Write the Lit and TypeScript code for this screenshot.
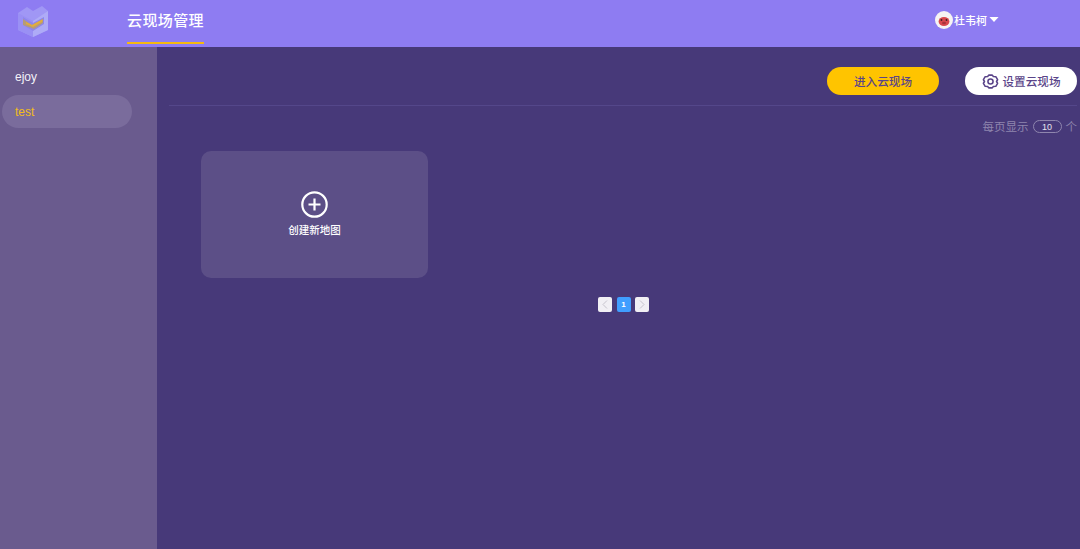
import { LitElement, html, css } from "lit";
import { customElement } from "lit/decorators.js";

@customElement("app-root")
export class AppRoot extends LitElement {
  static styles = css`
    :host { display: block; width: 1080px; height: 549px; overflow: hidden; font-family: "Liberation Sans", "Noto Sans CJK SC", sans-serif; }
    * { box-sizing: border-box; }
    .header { height: 47px; background: #8e7cf2; display: flex; align-items: flex-start; position: relative; }
    .logo { width: 32px; height: 32px; margin: 5px 0 0 17px; flex: none; }
    .tab { margin-left: 78px; height: 44px; width: 77px; padding-top: 11px; border-bottom: 2px solid #f5b90f; color: #fff; font-size: 15px; line-height: 20px; font-weight: 500; white-space: nowrap; letter-spacing: 0.4px; }
    .user { margin-left: 731px; margin-top: 10px; display: flex; align-items: center; height: 19px; color: #fff; font-size: 11px; font-weight: 500; }
    .avatar { width: 18px; height: 18px; margin-right: 1px; }
    .caret { width: 10px; height: 5px; margin-left: 2px; }
    .body { display: flex; height: 502px; }
    .side { width: 157px; background: #6a5b8e; padding: 13px 0 0 2px; flex: none; }
    .item { width: 130px; height: 33px; border-radius: 17px; padding: 1px 0 0 13px; font-size: 12px; line-height: 33px; color: #f3f1f8; margin-bottom: 2px; }
    .item.on { background: #7a6c9c; color: #f2bc1b; }
    .main { flex: 1; background: #473979; padding: 20px 3px 0 12px; }
    .actions { height: 39px; display: flex; justify-content: flex-end; align-items: flex-start; gap: 26px; border-bottom: 1px solid #54478a; }
    .btn { height: 28px; border-radius: 14px; display: flex; align-items: center; justify-content: center; font-size: 11.6px; font-weight: 500; color: #5a4489; }
    .btn.enter { width: 112px; background: #ffc400; }
    .btn.set { width: 112px; background: #fff; gap: 4px; }
    .gear { width: 17px; height: 17px; }
    .per { display: flex; justify-content: flex-end; align-items: center; height: 20px; margin-top: 10px; color: #8f86ae; font-size: 11.5px; }
    .count { width: 29px; height: 13px; margin: 0 4px; border: 1px solid #8f86ae; border-radius: 7px; color: #e6e3ef; font-size: 9px; font-weight: 500; line-height: 12px; text-align: center; }
    .grid { padding: 15px 0 0 32px; }
    .card { width: 227px; height: 127px; border-radius: 10px; background: #5c4f87; display: flex; flex-direction: column; align-items: center; padding-top: 40px; color: #fff; font-size: 10.5px; }
    .plus { width: 27px; height: 27px; margin-bottom: 6px; }
    .label { line-height: 13px; font-weight: 500; }
    .pager { display: flex; justify-content: center; gap: 4.5px; margin: 19px 0 0 1px; }
    .page { width: 14px; height: 15px; border-radius: 2px; background: #f1eff4; color: #c5c2cc; display: flex; align-items: center; justify-content: center; }
    .page svg { width: 6px; height: 9px; }
    .page.cur { background: #409eff; color: #fff; font-size: 8px; font-weight: 700; }
  `;

  render() {
    return html`
      <div class="header">
        <svg class="logo" viewBox="0 0 32 32">
          <path d="M1 8 L10 2 L16 6 L25 1 L31 6 V25 L16 32 L1 25Z" fill="#a097f5"/>
          <path d="M1 8 L16 16 V32 L1 25Z" fill="#9a90f4"/>
          <path d="M16 16 L31 6 V25 L16 32Z" fill="#aeabf7"/>
          <path d="M6 12 L16 18 L27 12 V19 L16 26 L6 20Z" fill="#8f86ea"/>
          <path d="M6 14 L15 20 L26 14 V18 L17 24 L6 20Z" fill="#b69b78"/>
          <path d="M9 17 L15 20 L26 14 L25 17 L16 22 L9 19Z" fill="#e2ad3c"/>
        </svg>
        <div class="tab">云现场管理</div>
        <div class="user">
          <svg class="avatar" viewBox="0 0 18 18">
            <circle cx="9" cy="9" r="9" fill="#f6f3f3"/>
            <ellipse cx="9" cy="10.5" rx="5.4" ry="4.6" fill="#d9474d"/>
            <circle cx="6.5" cy="9" r="0.9" fill="#3a2326"/><circle cx="11.5" cy="9" r="0.9" fill="#3a2326"/>
            <ellipse cx="9" cy="12" rx="2" ry="1.3" fill="#a8333a"/>
          </svg>
          <span>杜韦柯</span>
          <svg class="caret" viewBox="0 0 11 6"><path d="M0 0 H11 L5.5 6Z" fill="#fff"/></svg>
        </div>
      </div>
      <div class="body">
        <div class="side">
          <div class="item">ejoy</div>
          <div class="item on">test</div>
        </div>
        <div class="main">
          <div class="actions">
            <div class="btn enter">进入云现场</div>
            <div class="btn set">
              <svg class="gear" viewBox="0 0 24 24" fill="none" stroke="#5a4489" stroke-width="2.2" stroke-linejoin="round">
                <path d="M9.5 3 H14.5 L16 5 L19.5 5.2 L22 9.5 L20.5 12 L22 14.5 L19.5 18.8 L16 19 L14.5 21 H9.5 L8 19 L4.5 18.8 L2 14.5 L3.5 12 L2 9.5 L4.5 5.2 L8 5Z"/>
                <circle cx="12" cy="12" r="3.6"/>
              </svg>
              设置云现场
            </div>
          </div>
          <div class="per">每页显示<span class="count">10</span>个</div>
          <div class="grid">
            <div class="card">
              <svg class="plus" viewBox="0 0 27 27" fill="none" stroke="#fff">
                <circle cx="13.5" cy="13.5" r="12.2" stroke-width="2.2"/>
                <path d="M13.5 7.5 V19.5 M7.5 13.5 H19.5" stroke-width="2.2"/>
              </svg>
              <div class="label">创建新地图</div>
            </div>
          </div>
          <div class="pager">
            <div class="page"><svg viewBox="0 0 6 9" fill="none" stroke="currentColor"><path d="M5 .5 L1 4.5 L5 8.5"/></svg></div>
            <div class="page cur">1</div>
            <div class="page"><svg viewBox="0 0 6 9" fill="none" stroke="currentColor"><path d="M1 .5 L5 4.5 L1 8.5"/></svg></div>
          </div>
        </div>
      </div>
    `;
  }
}
